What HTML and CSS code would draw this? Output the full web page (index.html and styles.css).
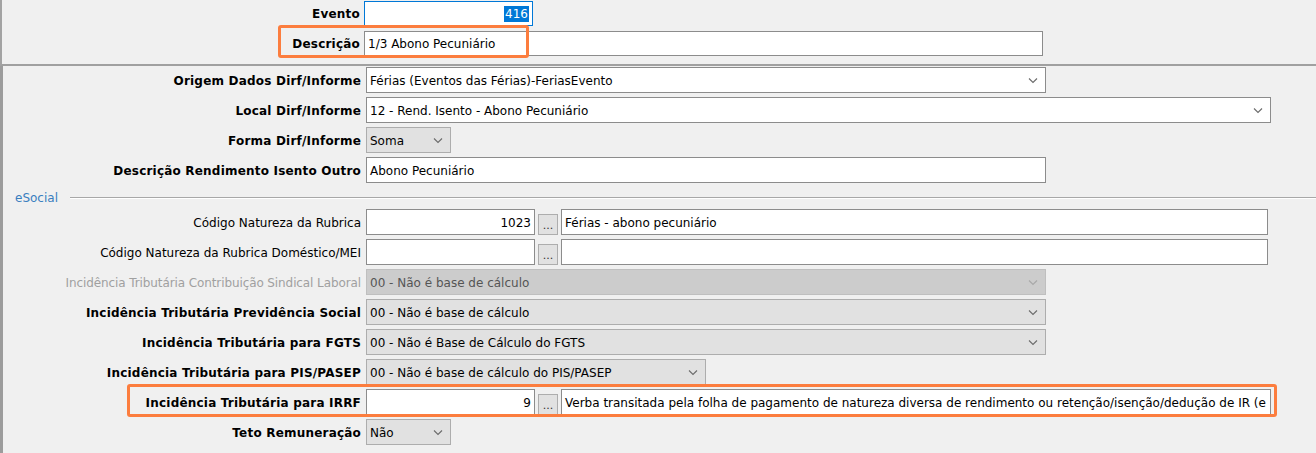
FILE: index.html
```html
<!DOCTYPE html>
<html>
<head>
	<title>Evento</title>
	<link rel="stylesheet" href="styles.css">
</head>
<body>

<div class="head">
	<div class="row">
		<span class="lbl bold">Evento</span>
		<div class="box code num focus"><span class="picked">416</span></div>
	</div>
	<div class="row">
		<span class="lbl bold">Descrição</span>
		<div class="box desc">1/3 Abono Pecuniário</div>
	</div>
	<div class="mark mark-desc"></div>
</div>

<div class="panel">
	<div class="row">
		<span class="lbl bold">Origem Dados Dirf/Informe</span>
		<div class="box combo mid">Férias (Eventos das Férias)-FeriasEvento<svg class="arrow" width="10" height="6"><path d="M1 .5l4 4 4-4"/></svg></div>
	</div>
	<div class="row">
		<span class="lbl bold">Local Dirf/Informe</span>
		<div class="box combo wide">12 - Rend. Isento - Abono Pecuniário<svg class="arrow" width="10" height="6"><path d="M1 .5l4 4 4-4"/></svg></div>
	</div>
	<div class="row">
		<span class="lbl bold">Forma Dirf/Informe</span>
		<div class="box drop small">Soma<svg class="arrow" width="10" height="6"><path d="M1 .5l4 4 4-4"/></svg></div>
	</div>
	<div class="row">
		<span class="lbl bold">Descrição Rendimento Isento Outro</span>
		<div class="box mid">Abono Pecuniário</div>
	</div>

	<div class="legend">
		<span class="legend-text">eSocial</span>
		<span class="legend-line"></span>
	</div>

	<div class="row">
		<span class="lbl">Código Natureza da Rubrica</span>
		<div class="box code num">1023</div>
		<div class="dots">...</div>
		<div class="box text">Férias - abono pecuniário</div>
	</div>
	<div class="row">
		<span class="lbl">Código Natureza da Rubrica Doméstico/MEI</span>
		<div class="box code num"></div>
		<div class="dots">...</div>
		<div class="box text"></div>
	</div>
	<div class="row">
		<span class="lbl off">Incidência Tributária Contribuição Sindical Laboral</span>
		<div class="box drop mid disabled">00 - Não é base de cálculo<svg class="arrow" width="10" height="6"><path d="M1 .5l4 4 4-4"/></svg></div>
	</div>
	<div class="row">
		<span class="lbl bold">Incidência Tributária Previdência Social</span>
		<div class="box drop mid">00 - Não é base de cálculo<svg class="arrow" width="10" height="6"><path d="M1 .5l4 4 4-4"/></svg></div>
	</div>
	<div class="row">
		<span class="lbl bold">Incidência Tributária para FGTS</span>
		<div class="box drop mid">00 - Não é Base de Cálculo do FGTS<svg class="arrow" width="10" height="6"><path d="M1 .5l4 4 4-4"/></svg></div>
	</div>
	<div class="row">
		<span class="lbl bold">Incidência Tributária para PIS/PASEP</span>
		<div class="box drop pis">00 - Não é base de cálculo do PIS/PASEP<svg class="arrow" width="10" height="6"><path d="M1 .5l4 4 4-4"/></svg></div>
	</div>
	<div class="row irrf">
		<span class="lbl bold">Incidência Tributária para IRRF</span>
		<div class="box code num">9</div>
		<div class="dots">...</div>
		<div class="box text text-long">Verba transitada pela folha de pagamento de natureza diversa de rendimento ou retenção/isenção/dedução de IR (e</div>
		<div class="mark mark-irrf"></div>
	</div>
	<div class="row">
		<span class="lbl bold">Teto Remuneração</span>
		<div class="box drop small">Não<svg class="arrow" width="10" height="6"><path d="M1 .5l4 4 4-4"/></svg></div>
	</div>
</div>

</body>
</html>
```

FILE: styles.css
```css
body{
	margin: 0;
	width: 1316px;
	height: 453px;
	overflow: hidden;
	background: #f0f0f0;
	font-family: "DejaVu Sans", sans-serif;
	font-size: 12px;
	color: #000;
}

.head{
	position: relative;
	display: flex;
	flex-direction: column;
	gap: 5px;
	padding-top: 1px;
	padding-bottom: 8px;
	border-left: 2px solid #a3a3a3;
	border-bottom: 2px solid #a0a0a0;
}
.head .row{
	height: 25px;
}
.head .lbl{
	width: 358px;
	margin-right: 4px;
}

.panel{
	display: flex;
	flex-direction: column;
	gap: 4px;
	padding-top: 1px;
	height: 400px;
	border-left: 3px solid #9c9c9c;
}

.row{
	position: relative;
	display: flex;
	align-items: center;
	height: 26px;
}

.lbl{
	width: 358px;
	margin-right: 5px;
	padding-top: 1px;
	text-align: right;
	white-space: nowrap;
}
.bold{
	font-weight: bold;
	letter-spacing: 0.2px;
}
.off{
	color: #a0a0a0;
	letter-spacing: -0.1px;
}

.box{
	position: relative;
	box-sizing: border-box;
	height: 100%;
	padding: 1px 3px 0;
	display: flex;
	align-items: center;
	background: #fff;
	border: 1px solid #8c8c8c;
	white-space: nowrap;
	overflow: hidden;
}
.focus{
	border-color: #0078d7;
}
.picked{
	background: #0078d7;
	color: #fff;
	padding: 1px 1px;
}
.num{
	justify-content: flex-end;
}

.code{ width: 169px; }
.desc{ width: 679px; }
.mid{ width: 680px; }
.wide{ width: 905px; }
.small{ width: 85px; }
.pis{ width: 340px; }
.text{
	width: 707px;
	margin-left: 3px;
}
.text-long{
	width: 710px;
}

.combo{
	padding-right: 24px;
}
.drop{
	background: #e1e1e1;
	border-color: #adadad;
	padding-right: 24px;
}
.disabled{
	background: #cccccc;
	border-color: #bfbfbf;
	color: #555;
}
.arrow{
	position: absolute;
	right: 7px;
	top: 10px;
	fill: none;
	stroke: #6b6b6b;
	stroke-width: 1.1;
}
.disabled .arrow{
	stroke: #a8a8a8;
}

.dots{
	box-sizing: border-box;
	width: 20px;
	height: 21px;
	margin-top: 4px;
	margin-left: 3px;
	background: #e1e1e1;
	border: 1px solid #adadad;
	font-size: 11px;
	line-height: 22px;
	text-align: center;
	color: #333;
}

.legend{
	display: flex;
	align-items: center;
	height: 18px;
	padding-top: 2px;
	margin-bottom: -2px;
	padding-left: 12px;
}
.legend-text{
	color: #3a7ebf;
	font-size: 12px;
}
.legend-line{
	flex: 1;
	margin-left: 12px;
	border-top: 1px solid #a8a8a8;
	border-bottom: 1px solid #fff;
}

.mark{
	position: absolute;
	box-sizing: border-box;
	border: 3px solid #fc7d3e;
	border-radius: 3px;
}
.mark-desc{
	left: 276px;
	top: 25px;
	width: 251px;
	height: 33px;
}
.mark-irrf{
	left: 124px;
	top: -5px;
	width: 1150px;
	height: 33px;
}
```
